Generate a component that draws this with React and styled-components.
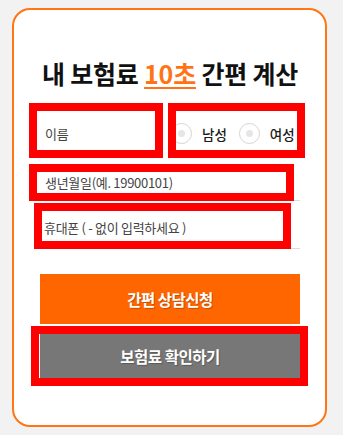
import styled, { createGlobalStyle } from "styled-components";

const Global = createGlobalStyle`
  html, body {
    margin: 0;
    padding: 0;
    background: #f2f2f2;
  }
  body {
    font-family: "Noto Sans CJK KR", "Noto Sans", sans-serif;
    color: #222;
  }
`;

const Card = styled.div`
  box-sizing: border-box;
  width: 315px;
  height: 419px;
  margin: 8px 0 0 12px;
  padding: 48px 25px 0 26px;
  background: #fff;
  border: 2px solid #ff7613;
  border-radius: 18px;
`;

const Title = styled.h2`
  margin: 0 0 15px;
  font-size: 25px;
  line-height: 30px;
  font-weight: 700;
  letter-spacing: -0.2px;
  text-align: center;
  color: #111;

  em {
    font-style: normal;
    color: #ff7315;
    text-decoration: underline;
    text-decoration-thickness: 2px;
    text-underline-offset: 3px;
  }
`;

/* red marker box around a field */
const Mark = styled.div`
  box-sizing: border-box;
  border: 8px solid #ff0000;
  background: #fff;
`;

const TopRow = styled.div`
  display: flex;
  gap: 5px;
  margin: 0 -5px 0 -11px;
`;

const NameBox = styled(Mark)`
  width: 134px;
  height: 55px;
`;

const GenderBox = styled(Mark)`
  width: 137px;
  height: 55px;
  overflow: hidden;
  display: flex;
  align-items: center;
  padding-top: 6px;
`;

const Field = styled.div`
  border-bottom: 1px solid #dcdcdc;
`;

const BirthBox = styled(Mark)`
  width: 265px;
  height: 37px;
  margin: 6px 0 -1px -11px;
`;

const PhoneBox = styled(Mark)`
  width: 257px;
  height: 46px;
  margin: 2px 0 -1px -6px;
`;

const Input = styled.input`
  box-sizing: border-box;
  display: block;
  width: 100%;
  height: 100%;
  margin: 0;
  padding: ${(p) => p.$top || 0}px 0 0 ${(p) => p.$left}px;
  border: 0;
  outline: none;
  background: transparent;
  font-family: inherit;
  font-size: 13px;
  letter-spacing: -0.3px;
  color: #444;

  &::placeholder {
    color: #444;
  }
`;

const Radio = styled.span`
  box-sizing: border-box;
  flex: none;
  width: 21px;
  height: 21px;
  margin-left: ${(p) => p.$offset}px;
  border: 1px solid #d4d4d4;
  border-radius: 50%;
  display: flex;
  align-items: center;
  justify-content: center;

  &::after {
    content: "";
    width: 7px;
    height: 7px;
    border-radius: 50%;
    background: #e6e6e6;
  }
`;

const RadioLabel = styled.span`
  margin-left: 10px;
  font-size: 13.5px;
  font-weight: 500;
  color: #1a1a1a;
  white-space: nowrap;
`;

const Button = styled.button`
  display: block;
  box-sizing: border-box;
  width: 260px;
  margin: 0;
  padding: 0;
  border: 0;
  font-family: inherit;
  font-size: 15.5px;
  font-weight: 700;
  letter-spacing: -0.5px;
  color: #fff;
  text-shadow: 1px 1px 1px rgba(0, 0, 0, 0.25);
`;

const ApplyButton = styled(Button)`
  height: 50px;
  margin-top: 25px;
  background: #ff6600;
`;

const CheckBox = styled(Mark)`
  width: 277px;
  margin: 2px 0 0 -9px;
`;

const CheckButton = styled(Button)`
  width: 261px;
  height: 44px;
  background: #777;
  border-left: 1px solid #fff;
`;

export default function App() {
  return (
    <>
      <Global />
      <Card>
        <Title>
          내 보험료 <em>10초</em> 간편 계산
        </Title>
        <TopRow>
          <NameBox>
            <Input placeholder="이름" $left={8} $top={6} />
          </NameBox>
          <GenderBox>
            <Radio $offset={-5} />
            <RadioLabel>남성</RadioLabel>
            <Radio $offset={12} />
            <RadioLabel>여성</RadioLabel>
          </GenderBox>
        </TopRow>
        <Field>
          <BirthBox>
            <Input placeholder="생년월일(예. 19900101)" $left={8} />
          </BirthBox>
        </Field>
        <Field>
          <PhoneBox>
            <Input placeholder="휴대폰 ( - 없이 입력하세요 )" $left={2} $top={3} />
          </PhoneBox>
        </Field>
        <ApplyButton>간편 상담신청</ApplyButton>
        <CheckBox>
          <CheckButton>보험료 확인하기</CheckButton>
        </CheckBox>
      </Card>
    </>
  );
}
